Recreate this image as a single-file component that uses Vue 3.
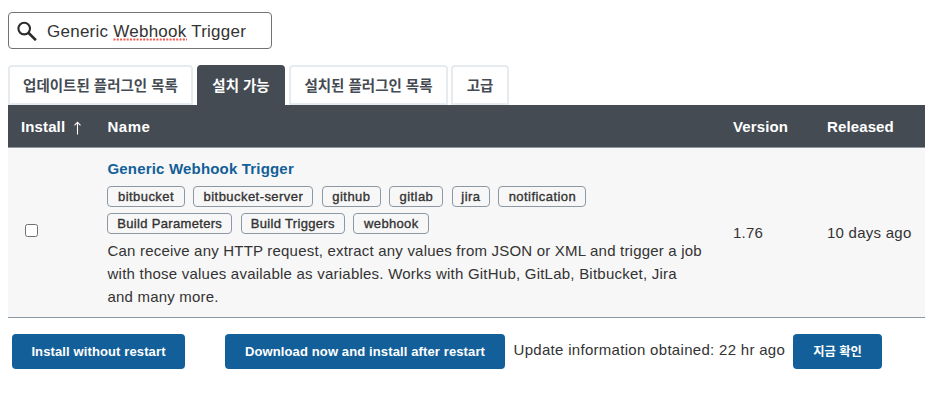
<script setup>
import { ref } from 'vue'

const query = ['Generic', 'Webhook', 'Trigger']
const tabs = [
  { label: '업데이트된 플러그인 목록', width: 185 },
  { label: '설치 가능', width: 88, active: true },
  { label: '설치된 플러그인 목록', width: 159 },
  { label: '고급', width: 58 }
]
const tagRows = [
  [
    { label: 'bitbucket', width: 78 },
    { label: 'bitbucket-server', width: 120 },
    { label: 'github', width: 59 },
    { label: 'gitlab', width: 54 },
    { label: 'jira', width: 38 },
    { label: 'notification', width: 88 }
  ],
  [
    { label: 'Build Parameters', width: 125.4 },
    { label: 'Build Triggers', width: 104 },
    { label: 'webhook', width: 76 }
  ]
]
const description = [
  'Can receive any HTTP request, extract any values from JSON or XML and trigger a job',
  'with those values available as variables. Works with GitHub, GitLab, Bitbucket, Jira',
  'and many more.'
]
const selected = ref(false)
</script>

<template>
  <main class="page">
    <div class="search">
      <svg class="search-icon" viewBox="0 0 20 20" width="20" height="20" fill="none" stroke="#2b2b2b">
        <circle cx="7.2" cy="7.6" r="5.8" stroke-width="2.1" />
        <path d="M11.4 11.8 L18.9 19.2" stroke-width="2.6" />
      </svg>
      <span class="query">{{ query[0] }} <span class="misspelt">{{ query[1] }}<svg class="squiggle" width="74" height="3"><path d="M0.5 1.5H74" stroke="#f5574f" stroke-width="2" stroke-dasharray="2 1.3" /></svg></span> {{ query[2] }}</span>
    </div>

    <nav class="tabs">
      <a v-for="t in tabs" :key="t.label" class="tab" :class="{ active: t.active }" :style="{ width: t.width + 'px' }">{{ t.label }}</a>
    </nav>

    <section class="table">
      <div class="row head">
        <span>Install <svg class="arrow" width="9" height="14" viewBox="0 0 9 14" fill="none" stroke="#fff"><path d="M4.5 13.5V1.2M1.5 4.3L4.5 1.2L7.5 4.3" stroke-width="1.1" /></svg></span>
        <span class="name">Name</span>
        <span>Version</span>
        <span>Released</span>
      </div>
      <div class="row body">
        <span><input v-model="selected" class="check" type="checkbox" /></span>
        <div class="plugin">
          <a class="title">Generic Webhook Trigger</a>
          <div v-for="(r, i) in tagRows" :key="i" class="tags">
            <span v-for="tag in r" :key="tag.label" class="tag" :style="{ width: tag.width + 'px' }">{{ tag.label }}</span>
          </div>
          <div class="description">
            <div v-for="line in description" :key="line">{{ line }}</div>
          </div>
        </div>
        <span class="value">1.76</span>
        <span class="value">10 days ago</span>
      </div>
    </section>

    <footer class="actions">
      <button class="btn install">Install without restart</button>
      <button class="btn download">Download now and install after restart</button>
      <span class="update">Update information obtained: 22 hr ago</span>
      <button class="btn check-now">지금 확인</button>
    </footer>
  </main>
</template>

<style>
body { background: #fff; }
</style>

<style scoped>
* { box-sizing: border-box; }
.page {
  width: 936px;
  height: 404px;
  padding: 12px 11px 0 8px;
  overflow: hidden;
  color: #333;
  font: 15px/23px "Liberation Sans", "Noto Sans CJK KR", sans-serif;
  white-space: nowrap;
}
.search {
  display: flex;
  align-items: center;
  width: 264px;
  height: 37px;
  padding-left: 8px;
  border: 1px solid #737373;
  border-radius: 4px;
}
.search-icon { margin-right: 10px; }
.query { padding-top: 1px; font-size: 17px; letter-spacing: 0.25px; }
.misspelt { position: relative; }
.squiggle { position: absolute; left: 0; bottom: 0; }
.tabs { display: flex; gap: 4px; margin-top: 16px; }
.tab {
  display: flex;
  align-items: center;
  justify-content: center;
  height: 40px;
  padding-top: 2px;
  border: 2px solid #e6ebf0;
  border-radius: 4px 4px 0 0;
  color: #444b53;
  font-size: 14.5px;
  font-weight: 700;
}
.tab:last-child { margin-left: -1px; }
.tab.active { background: #444b53; border-color: #444b53; color: #fff; }
.table { width: 917px; }
.row {
  display: grid;
  grid-template-columns: 86.5px 625.5px 94px 1fr;
  align-items: center;
  padding-left: 13px;
  border-bottom: 1px solid #8c98a3;
}
.head { height: 43px; background: #444b53; color: #fff; font-weight: 700; letter-spacing: 0.12px; }
.name { letter-spacing: 0.5px; }
.arrow { margin-left: 4px; vertical-align: -3px; }
.body { height: 170px; background: #f7f7f7; }
.check {
  display: block;
  appearance: none;
  width: 13px;
  height: 13px;
  margin: -4px 0 0 4px;
  border: 1px solid #707070;
  border-radius: 2.5px;
  background: #fff;
}
.plugin { align-self: start; padding-top: 9px; }
.title { display: block; height: 23px; color: #135f99; font-weight: 700; letter-spacing: 0.18px; }
.tags { display: flex; gap: 8.5px; height: 21px; margin: 6px 0 6px -0.5px; letter-spacing: 0.45px; }
.tags + .tags { margin-top: 0; letter-spacing: 0.33px; }
.tag {
  display: flex;
  flex: none;
  align-items: center;
  justify-content: center;
  height: 21px;
  border: 1px solid #8c98a3;
  border-radius: 4px;
  font-size: 13px;
  line-height: 19px;
  -webkit-text-stroke: 0.35px #333;
}
.tag:first-child { margin-right: -0.1px; }
.description { margin-top: -1px; letter-spacing: 0.2px; }
.description > :nth-child(2) { letter-spacing: 0.23px; }
.value { letter-spacing: 0.25px; }
.actions { display: flex; align-items: flex-start; padding: 16px 0 0 4px; }
.btn {
  height: 35px;
  padding: 0;
  border: 0;
  border-radius: 4px;
  background: #135f99;
  color: #fff;
  font: 700 13px "Liberation Sans", "Noto Sans CJK KR", sans-serif;
  letter-spacing: 0.12px;
}
.install { width: 173px; }
.download { width: 280px; margin-left: 40px; }
.update { width: 271.5px; margin: 4px 8px 0 8.5px; letter-spacing: 0.3px; }
.check-now { width: 89px; padding-bottom: 2px; font-size: 12.3px; letter-spacing: 0; }
</style>
